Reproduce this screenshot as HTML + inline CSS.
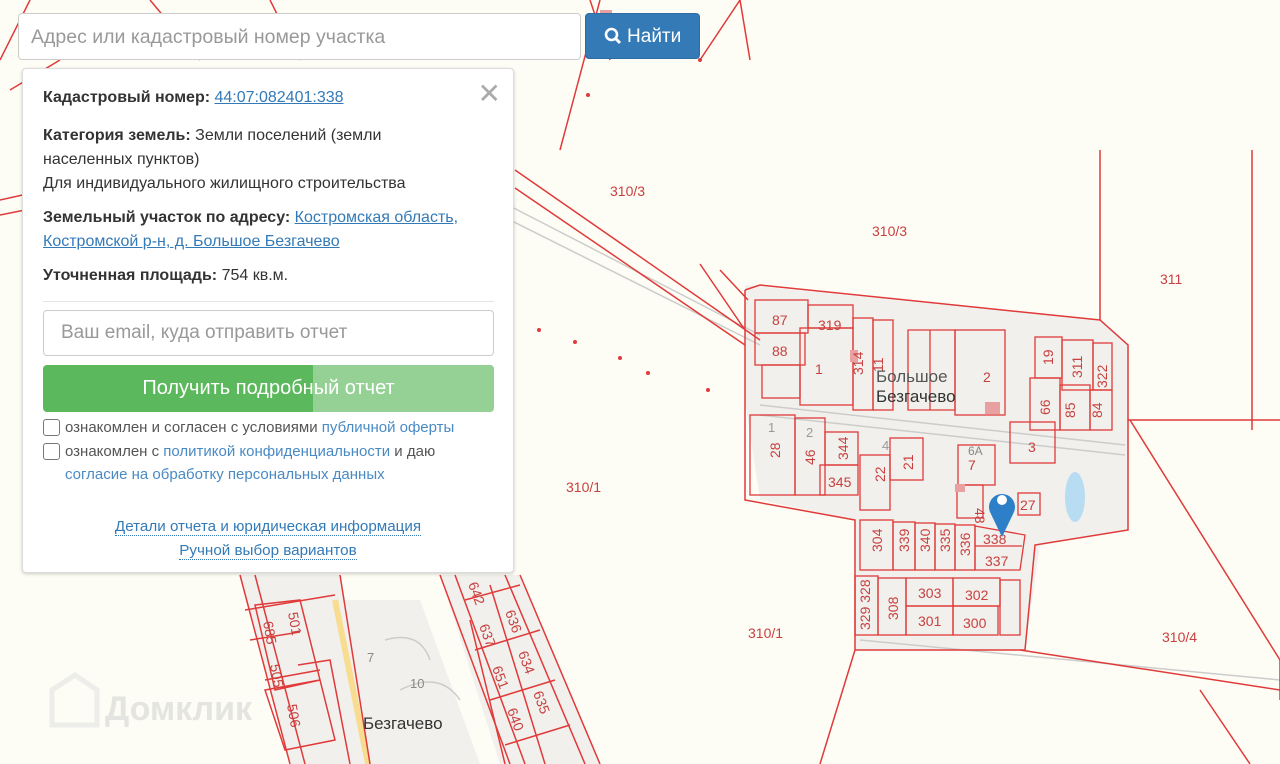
<!DOCTYPE html>
<html><head><meta charset="utf-8"><style>
*{box-sizing:border-box}
body{margin:0;width:1280px;height:764px;overflow:hidden;background:#fdfdf5;font-family:"Liberation Sans",sans-serif;position:relative}
svg.map{position:absolute;left:0;top:0}
.search{position:absolute;left:18px;top:13px;width:563px;height:47px;background:#fff;border:1px solid #ccc;border-radius:4px;padding:0 12px;font-size:19.5px;color:#999;line-height:46px;font-family:"Liberation Sans",sans-serif}
.btn{position:absolute;left:585px;top:13px;width:115px;height:46px;background:#337ab7;border-radius:4px;color:#fff;font-size:19px;line-height:46px;text-align:center;border:1px solid #2e6da4}
.pop{position:absolute;left:22px;top:68px;width:492px;height:505px;background:#fff;border:1px solid #ddd;border-radius:4px;box-shadow:0 1px 3px rgba(0,0,0,.2);padding:0 20px;font-size:16px;color:#333}
.pop p{margin:0}
.pop b{font-weight:bold}
.pop a{color:#337ab7;text-decoration:underline}
.x{position:absolute;right:12px;top:8px;font-size:28px;color:#aaa;font-weight:300}
.inp{position:absolute;left:20px;top:241px;width:451px;height:46px;border:1px solid #ccc;border-radius:4px;font-size:19px;color:#999;padding-left:17px;line-height:44px}
.g{position:absolute;left:20px;top:296px;width:451px;height:47px;background:#5cb85c;border-radius:4px;color:#fff;font-size:20px;text-align:center;line-height:46px;overflow:hidden}
.cb{position:absolute;left:20px;width:17px;height:17px;border:1px solid #777;border-radius:3px}
.sm{position:absolute;left:42px;font-size:15px;color:#555}
.sm a,.sm span{color:#4a8ac4;text-decoration:none}
.dl{position:absolute;width:100%;left:0;text-align:center;font-size:15.2px}
.dl a{color:#337ab7;text-decoration:none;border-bottom:1px dotted #337ab7}
</style></head><body>
<svg class="map" width="1280" height="764" viewBox="0 0 1280 764" font-family="Liberation Sans, sans-serif">
<g fill="#f1f0ec" stroke="none">
<path d="M745 285 L1100 320 L1128 345 L1128 530 L1040 545 L1025 650 L855 650 L855 520 L760 500 L745 400 Z"/>
<path d="M240 575 L340 575 L380 764 L290 764 Z"/>
<path d="M440 575 L520 575 L600 764 L500 764 Z"/>
<path d="M330 600 L420 600 L480 764 L360 764Z"/>
</g>
<path d="M335 600 L368 764" stroke="#f8dc90" stroke-width="6" fill="none"/>
<g fill="none" stroke="#ccc" stroke-width="1.5">
<path d="M440 170 L760 335 M430 180 L760 345"/>
<path d="M760 405 L1125 445 M760 415 L1125 455"/>
<path d="M860 640 L1280 680"/>
<path d="M385 640 Q420 630 430 660 M400 690 Q440 670 460 700"/>
</g>
<g fill="none" stroke="#e03a3a" stroke-width="1.5">
<path d="M0 200 L90 180 M0 215 L100 195"/>
<path d="M515 170 L760 340 M515 188 L745 345"/>
<path d="M745 290 L760 285 L1100 320 L1128 345 L1128 420 L1280 420"/>
<path d="M1100 150 L1100 320 M1252 150 L1252 430"/>
<path d="M745 290 L745 500 L855 520 L855 650 L1025 650 L1035 545 L1128 530 L1128 420"/>
<path d="M700 264 L745 330 M720 270 L748 300"/>
<path d="M1130 420 L1280 660 L1280 700"/>
<path d="M855 650 L820 764 M1020 650 L1280 690 M1200 690 L1250 764"/>
<path d="M560 150 L600 0 M590 0 L610 60"/>
<path d="M740 0 L750 60 M700 60 L740 0"/>
<path d="M0 60 L30 0 M10 90 L60 60"/>
<path d="M150 0 L200 60 M270 0 L300 60"/>
<path d="M240 575 L290 764 M255 575 L305 764 M340 575 L370 764"/>
<path d="M440 575 L510 764 M455 575 L525 764 M505 575 L585 764 M520 575 L600 764"/>
<path d="M245 610 L335 595 M250 640 L300 632 M265 680 L320 670"/>
<path d="M255 605 L300 600 L320 680 L275 690Z M265 690 L320 680 L335 740 L285 750Z"/>
<path d="M465 600 L520 585 M475 650 L540 630 M490 700 L555 680 M505 745 L570 725 M470 620 L505 764 M490 585 L545 764"/>
<path d="M298 665 L330 660 L350 764"/>
</g>
<g fill="none" stroke="#e03a3a" stroke-width="1.3">
<rect x="755" y="300" width="53" height="33"/><rect x="755" y="333" width="50" height="32"/><rect x="762" y="365" width="38" height="33"/>
<rect x="800" y="328" width="53" height="77"/><rect x="808" y="305" width="45" height="23"/>
<rect x="853" y="318" width="20" height="92"/><rect x="873" y="320" width="20" height="90"/>
<path d="M908 330 L955 330 L955 410 L908 410Z M930 330 L930 410"/>
<rect x="955" y="330" width="50" height="85"/>
<rect x="1035" y="337" width="27" height="41"/><rect x="1062" y="340" width="31" height="50"/><rect x="1093" y="343" width="19" height="47"/>
<rect x="1030" y="378" width="30" height="52"/><rect x="1060" y="385" width="30" height="45"/><rect x="1090" y="390" width="22" height="40"/>
<rect x="1010" y="422" width="45" height="41"/>
<rect x="750" y="415" width="45" height="80"/><rect x="795" y="418" width="30" height="77"/>
<rect x="825" y="432" width="33" height="33"/><rect x="820" y="465" width="38" height="30"/>
<rect x="860" y="455" width="30" height="55"/><rect x="890" y="438" width="33" height="42"/>
<rect x="958" y="445" width="37" height="40"/><rect x="957" y="485" width="26" height="33"/><rect x="1018" y="493" width="22" height="22"/>
<rect x="860" y="520" width="33" height="50"/><rect x="893" y="522" width="22" height="48"/><rect x="915" y="523" width="20" height="47"/>
<rect x="935" y="524" width="20" height="46"/><rect x="955" y="525" width="20" height="45"/>
<path d="M975 526 L1025 535 L1020 570 L975 570 Z M975 546 L1022 546"/>
<rect x="855" y="576" width="23" height="59"/><rect x="878" y="578" width="28" height="57"/>
<rect x="906" y="578" width="47" height="28"/><rect x="906" y="606" width="47" height="29"/>
<rect x="953" y="578" width="47" height="28"/><rect x="953" y="606" width="45" height="29"/><rect x="1000" y="580" width="20" height="55"/>
</g>
<ellipse cx="1075" cy="497" rx="10" ry="25" fill="#b8dcf2"/>
<g fill="#e8a0a0"><rect x="985" y="402" width="15" height="12"/><rect x="955" y="484" width="10" height="8"/><rect x="850" y="350" width="8" height="12"/><rect x="600" y="10" width="12" height="20"/></g>
<g fill="#e03a3a"><circle cx="588" cy="95" r="2"/><circle cx="539" cy="330" r="2"/><circle cx="575" cy="342" r="2"/><circle cx="620" cy="358" r="2"/><circle cx="648" cy="373" r="2"/><circle cx="708" cy="390" r="2"/><circle cx="700" cy="60" r="2"/></g>
<g fill="#c84040" font-size="14">
<text x="610" y="196">310/3</text><text x="872" y="236">310/3</text><text x="1160" y="284">311</text>
<text x="566" y="492">310/1</text><text x="748" y="638">310/1</text><text x="1162" y="642">310/4</text>
<text x="772" y="325">87</text><text x="772" y="356">88</text><text x="818" y="330">319</text><text x="815" y="374">1</text>
<text x="983" y="382">2</text><text x="1028" y="452">3</text><text x="968" y="470">7</text>
</g>
<g fill="#c84040" font-size="14">
<text transform="translate(882,552) rotate(-90)">304</text><text transform="translate(909,552) rotate(-90)">339</text>
<text transform="translate(930,552) rotate(-90)">340</text><text transform="translate(950,552) rotate(-90)">335</text>
<text transform="translate(970,556) rotate(-90)">336</text><text x="983" y="544">338</text><text x="985" y="566">337</text>
<text x="918" y="598">303</text><text x="918" y="626">301</text><text x="965" y="600">302</text><text x="963" y="628">300</text>
<text transform="translate(898,620) rotate(-90)">308</text><text transform="translate(870,630) rotate(-90)">329 328</text>
<text transform="translate(780,458) rotate(-90)">28</text><text transform="translate(815,465) rotate(-90)">46</text>
<text transform="translate(848,460) rotate(-90)">344</text><text x="828" y="487">345</text>
<text transform="translate(885,482) rotate(-90)">22</text><text transform="translate(913,470) rotate(-90)">21</text>
<text transform="translate(975,508) rotate(90)">48</text><text x="1020" y="510">27</text>
<text transform="translate(863,375) rotate(-90)">314</text><text transform="translate(883,372) rotate(-90)">11</text>
<text transform="translate(1053,365) rotate(-90)">19</text><text transform="translate(1082,378) rotate(-90)">311</text>
<text transform="translate(1107,388) rotate(-90)">322</text><text transform="translate(1050,415) rotate(-90)">66</text>
<text transform="translate(1075,418) rotate(-90)">85</text><text transform="translate(1102,418) rotate(-90)">84</text>
<text transform="translate(263,622) rotate(80)">685</text><text transform="translate(288,613) rotate(80)">501</text>
<text transform="translate(270,665) rotate(80)">505</text><text transform="translate(287,705) rotate(80)">506</text>
<text transform="translate(468,584) rotate(70)">642</text><text transform="translate(479,626) rotate(70)">637</text>
<text transform="translate(505,612) rotate(70)">636</text><text transform="translate(492,668) rotate(70)">651</text>
<text transform="translate(518,653) rotate(70)">634</text><text transform="translate(507,710) rotate(70)">640</text>
<text transform="translate(533,693) rotate(70)">635</text>
</g>
<text x="876" y="382" fill="#555" font-size="17">Большое</text>
<text x="876" y="402" fill="#333" font-size="17">Безгачево</text>
<text x="363" y="729" fill="#333" font-size="17">Безгачево</text>
<text x="367" y="662" fill="#888" font-size="13">7</text><text x="410" y="688" fill="#888" font-size="13">10</text>
<text x="968" y="455" fill="#888" font-size="12">6А</text><text x="768" y="432" fill="#999" font-size="13">1</text><text x="806" y="437" fill="#999" font-size="13">2</text><text x="882" y="450" fill="#999" font-size="13">4</text>
<g opacity="0.5" fill="none" stroke="#ddd" stroke-width="5"><path d="M52 725 L52 690 L75 675 L97 690 L97 725 Z"/></g>
<text x="105" y="720" fill="#e4e4e0" font-size="34" font-weight="bold">Домклик</text>
<path d="M1002 537 L990 512 A13 13 0 1 1 1014 512 Z" fill="#2d7fc8"/>
<circle cx="1002" cy="500" r="5" fill="#fff"/>
</svg>
<div class="search">Адрес или кадастровый номер участка</div>
<div class="btn"><svg width="18" height="18" viewBox="0 0 18 18" style="vertical-align:-3px"><circle cx="7.5" cy="7.5" r="5.5" stroke="#fff" stroke-width="2.6" fill="none"/><path d="M11.5 11.5 L16 16" stroke="#fff" stroke-width="3"/></svg> Найти</div>
<div class="pop">
<div class="x">✕</div>
<p style="position:absolute;top:20px"><b>Кадастровый номер:</b> <a>44:07:082401:338</a></p>
<p style="position:absolute;top:55px;line-height:24px;width:450px"><b>Категория земель:</b> Земли поселений (земли<br>населенных пунктов)<br>Для индивидуального жилищного строительства</p>
<p style="position:absolute;top:137px;line-height:24px;width:460px"><b>Земельный участок по адресу:</b> <a>Костромская область,<br>Костромской р-н, д. Большое Безгачево</a></p>
<p style="position:absolute;top:198px"><b>Уточненная площадь:</b> 754 кв.м.</p>
<div style="position:absolute;left:20px;top:232px;width:451px;border-top:1px solid #e5e5e5"></div>
<div class="inp">Ваш email, куда отправить отчет</div>
<div class="g">Получить подробный отчет<div style="position:absolute;left:270px;top:0;width:181px;height:47px;background:rgba(255,255,255,.35)"></div></div>
<div class="cb" style="top:350px"></div><div class="sm" style="top:350px">ознакомлен и согласен с условиями <span>публичной оферты</span></div>
<div class="cb" style="top:374px"></div><div class="sm" style="top:374px">ознакомлен с <span>политикой конфиденциальности</span> и даю</div>
<div class="sm" style="top:397px"><span>согласие на обработку персональных данных</span></div>
<div class="dl" style="top:449px"><a>Детали отчета и юридическая информация</a></div>
<div class="dl" style="top:473px"><a>Ручной выбор вариантов</a></div>
</div>
</body></html>
